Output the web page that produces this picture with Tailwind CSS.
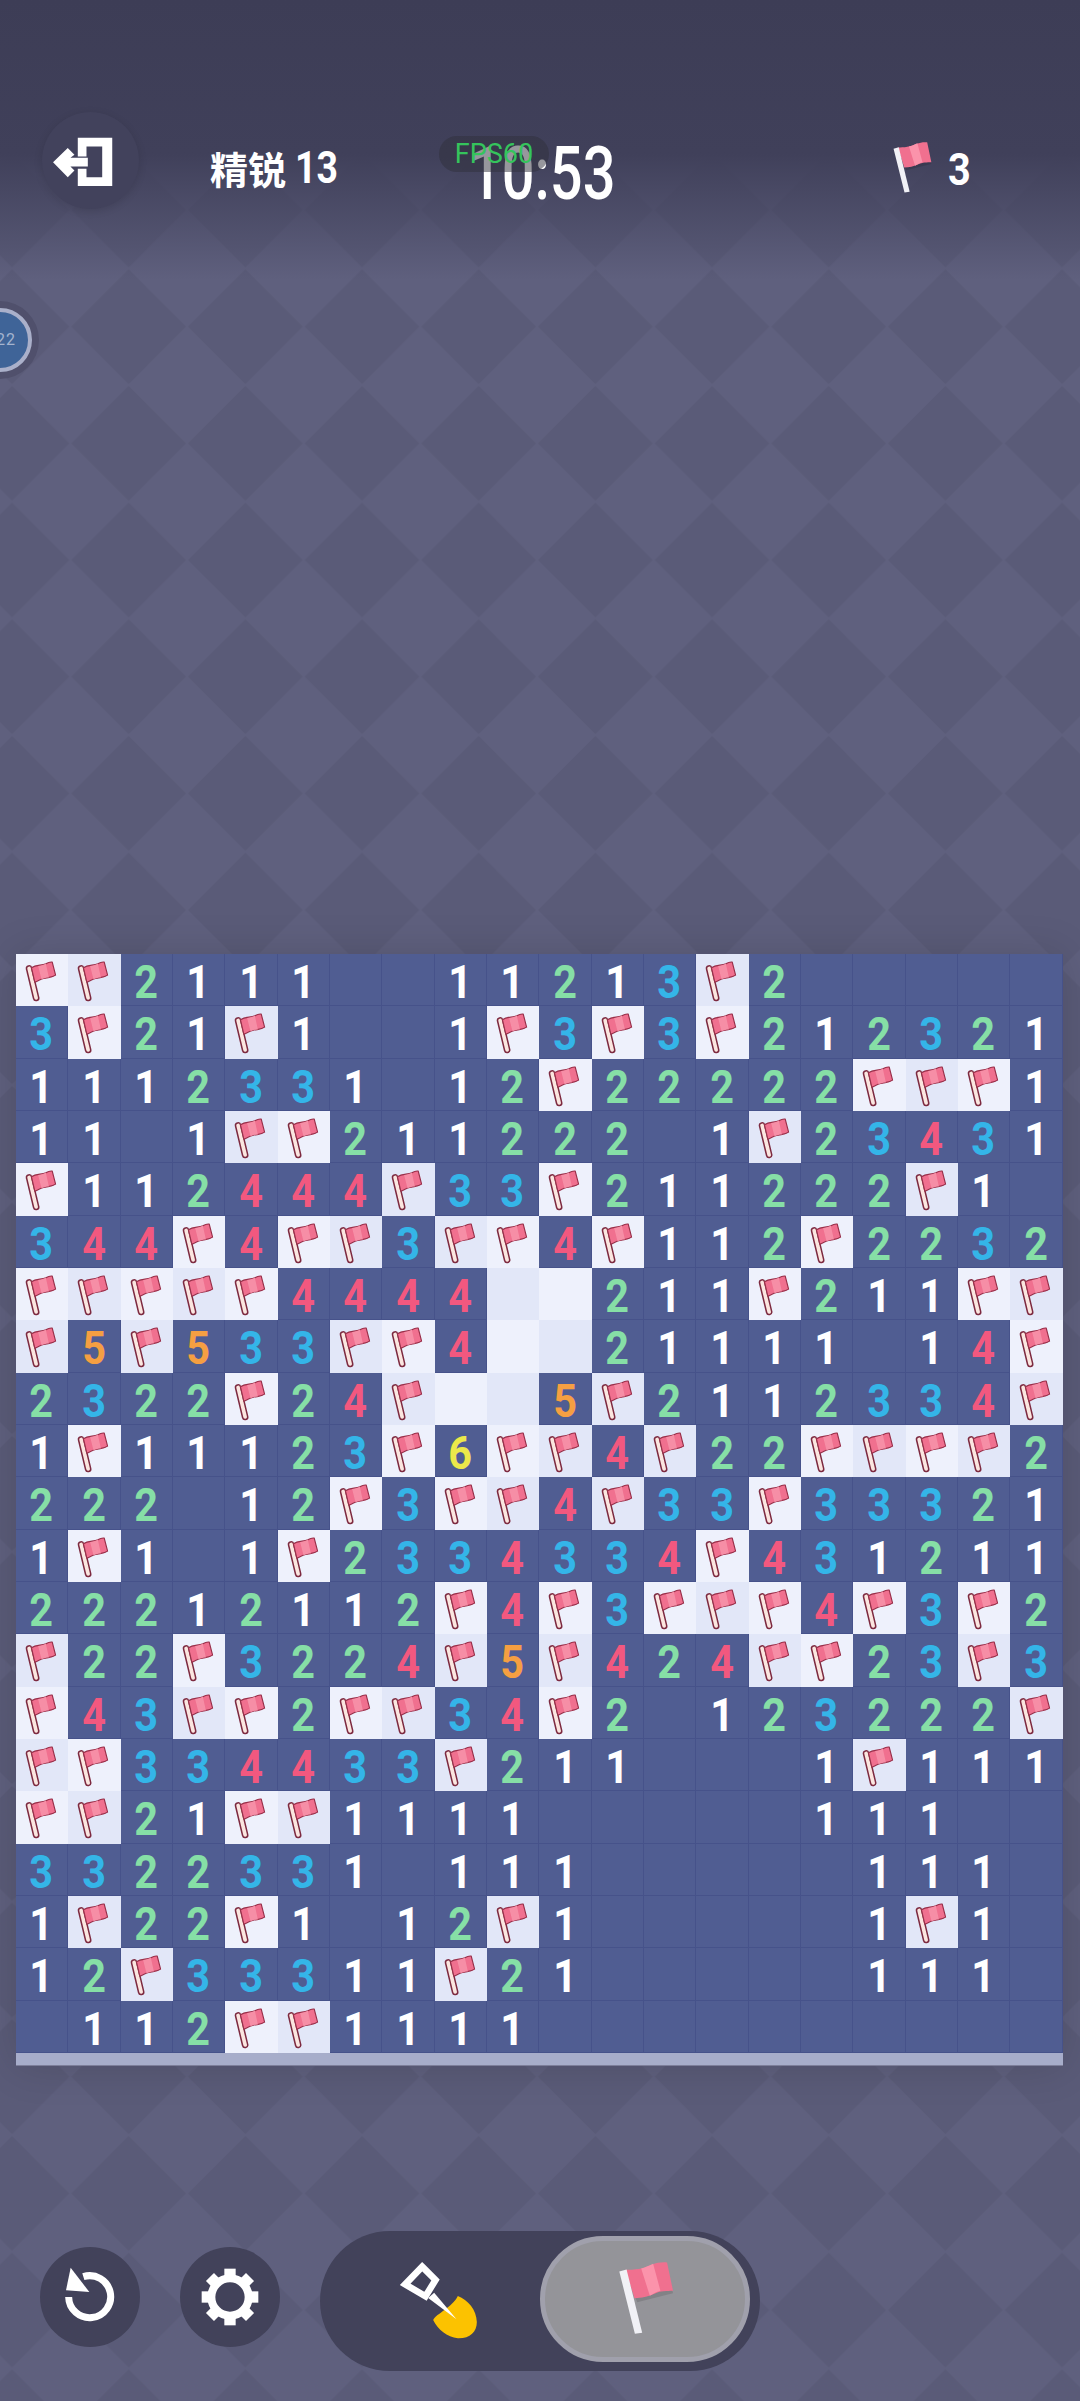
<!DOCTYPE html>
<html lang="zh">
<head>
  <meta charset="UTF-8">
  <meta name="viewport" content="width=device-width, initial-scale=1.0">
  <title>Minesweeper</title>
  <script src="https://cdn.jsdelivr.net/npm/@tailwindcss/browser@4"></script>
</head>
<body class="bg-[#5f607e] font-['Roboto','Noto_Sans_CJK_SC',sans-serif] text-white">

  <!-- shared flag drawings -->
  <svg class="hidden">
    <symbol id="cellFlag" viewBox="48 43 156 156">
      <path d="M87 86 L108 174" stroke="#7d2a40" stroke-width="20" stroke-linecap="round" fill="none"/>
      <path d="M87 86 L108 174" stroke="#fbe6e0" stroke-width="11" stroke-linecap="round" fill="none"/>
      <path d="M94 84 C108 74 124 78 137 72 C144 68 150 66 156 67 L166 106 C156 114 142 112 130 116 C120 119 112 124 104 127 Z" fill="#f0708f" stroke="#98304a" stroke-width="3.5" stroke-linejoin="round"/>
      <path d="M114 79 C122 78 130 75 137 72 L146 113 C138 113 132 115 124 118 Z" fill="#f68ea6"/>
    </symbol>
    <symbol id="plainFlag" viewBox="700 60 190 240">
      <path d="M735 92 L860 70 L878 153 L770 180 Z" fill="#000" opacity="0.12" transform="translate(0 10)"/>
      <path d="M734 92 C760 92 790 90 815 76 C830 70 848 68 860 70 L878 155 C860 156 840 154 820 165 C800 174 785 176 762 178 Z" fill="#f0708f"/>
      <path d="M782 88 C792 86 805 80 818 74 L840 155 C830 157 822 162 808 170 Z" fill="#fb93ab"/>
      <path d="M716 97 L738 91 L785 282 L763 285 Z" fill="#f1f1f6"/>
    </symbol>
  </svg>

  <div class="relative w-[1080px] h-[2401px] overflow-hidden">

    <!-- Background: diamonds and dark top -->
    <svg class="absolute inset-0" width="1080" height="2401">
      <defs>
        <pattern id="diamonds" width="116.67" height="116.67" patternUnits="userSpaceOnUse" patternTransform="translate(-46.3 35)">
          <path d="M58.33 1 L115.6 58.33 L58.33 115.6 L1 58.33 Z" fill="#000" fill-opacity="0.05"/>
        </pattern>
      </defs>
      <rect width="1080" height="2401" fill="url(#diamonds)"/>
    </svg>
    <div class="absolute inset-x-0 top-0 h-[280px] bg-[linear-gradient(to_bottom,#3d3d56_0%,#40405a_55%,#46466200_100%)]"></div>

    <!-- Side timer bubble -->
    <div class="absolute left-[-39px] top-[301px] w-[78px] h-[78px] rounded-full bg-[#50506c] flex items-center justify-center">
      <div class="w-[64px] h-[64px] rounded-full border-[4px] border-[#aab0ca] bg-[#3f6498] flex items-center justify-center">
        <span class="pl-[12px] text-[16px] tracking-[1px] text-[#a5b4cf]">22</span>
      </div>
    </div>

    <div class="relative pt-[112px]">

      <!-- Header -->
      <div class="relative flex items-start h-[97px] pl-[42px]">
        <button class="w-[97px] h-[97px] rounded-full bg-[#42425c] shadow-[0_2px_8px_rgba(0,0,0,0.12)]">
          <svg viewBox="125 335 290 290" class="w-full h-full">
            <path d="M232 412 H335 V556 H232 V505 H258 V530 H305 V438 H258 V468 H232 Z" fill="#fff"/>
            <path d="M158 485 L202 443 L222 463 L210 472 H262 V498 H210 L222 510 L202 530 Z" fill="#fff"/>
          </svg>
        </button>
        <div class="ml-[71px] mt-[33px] flex items-center h-[46px] font-bold">
          <span class="text-[38px] leading-none font-['Noto_Sans_CJK_SC',sans-serif]">精锐</span>
          <span class="ml-[9px] text-[44px] leading-none scale-x-85 origin-left">13</span>
        </div>
        <div class="absolute left-[469px] top-[25px] text-[74px] leading-none font-medium scale-x-[0.78] origin-left whitespace-nowrap">10:53</div>
        <div class="absolute left-[439px] top-[24px] w-[110px] h-[36px] rounded-full bg-[#2f2f3c]/50 flex items-center justify-center text-[27px] leading-none text-[#35c45c]">FPS60</div>
        <svg class="absolute left-[889px] top-[28px]" width="46" height="56"><use href="#plainFlag"/></svg>
        <span class="absolute left-[948px] top-[36px] text-[44px] leading-none font-bold scale-x-90 origin-left">3</span>
      </div>

      <!-- Board -->
      <div class="ml-[16px] mt-[745px] w-[1046.6px] shadow-[0_0_40px_rgba(0,0,0,0.14)]">
        <div id="board" class="grid grid-cols-[repeat(20,52.33px)] auto-rows-[52.33px] bg-[#505d92]"></div>
        <div class="h-[13px] bg-[#a7adca] border-b border-[#7d7f9a]"></div>
      </div>

      <!-- Bottom toolbar -->
      <div class="flex items-center mt-[165px] pl-[40px] gap-[40px]">
        <button class="w-[100px] h-[100px] rounded-full bg-[#42425a] -mt-[8px]">
          <svg viewBox="30 20 300 300" class="w-full h-full">
            <path d="M160 109 A63 63 0 1 1 116 170" fill="none" stroke="#fff" stroke-width="21"/>
            <path d="M122 82 L178 155 L108 150 Z" fill="#fff"/>
          </svg>
        </button>
        <button class="w-[100px] h-[100px] rounded-full bg-[#42425a] -mt-[8px]">
          <svg viewBox="450 20 300 300" class="w-full h-full">
            <circle cx="600" cy="170" r="56" fill="none" stroke="#fff" stroke-width="24"/>
            <g fill="#fff">
              <path d="M583 85 H617 V120 H583 Z"/>
              <path d="M583 85 H617 V120 H583 Z" transform="rotate(45 600 170)"/>
              <path d="M583 85 H617 V120 H583 Z" transform="rotate(90 600 170)"/>
              <path d="M583 85 H617 V120 H583 Z" transform="rotate(135 600 170)"/>
              <path d="M583 85 H617 V120 H583 Z" transform="rotate(180 600 170)"/>
              <path d="M583 85 H617 V120 H583 Z" transform="rotate(225 600 170)"/>
              <path d="M583 85 H617 V120 H583 Z" transform="rotate(270 600 170)"/>
              <path d="M583 85 H617 V120 H583 Z" transform="rotate(315 600 170)"/>
            </g>
          </svg>
        </button>
        <div class="flex items-center w-[440px] h-[140px] rounded-full bg-[#42425a] pl-[77px] pr-[10px]">
          <svg viewBox="50 55 245 240" width="82" height="80">
            <path d="M232 160 C262 172 288 200 289 238 C289 268 268 288 232 287 C200 282 172 262 158 232 C168 212 214 196 232 160 Z" fill="#fcc200"/>
            <path d="M143 166 L161 150 L228 230 Z" fill="#fff"/>
            <path d="M125 72 L165 112 L135 161 L74 125 Z" fill="none" stroke="#fff" stroke-width="20" stroke-linejoin="miter"/>
          </svg>
          <div class="ml-auto -mt-1 w-[210px] h-[126px] rounded-full border-[5px] border-[#a0a0ac] bg-[#949499] flex items-center justify-center">
            <svg width="63" height="80"><use href="#plainFlag"/></svg>
          </div>
        </div>
      </div>
    </div>
  </div>

  <script>
    // F flag, W open white cell, dot empty
    const rows = [
      'FF2111..11213F2.....',
      '3F21F1..1F3F3F212321',
      '1112331.12F22222FFF1',
      '11.1FF211222.1F23431',
      'F112444F33F211222F1.',
      '344F4FF3FF4F112F2232',
      'FFFFF4444WW211F211FF',
      'F5F533FF4WW21111.14F',
      '2322F24FWW5F2112334F',
      '1F11123F6FF4F22FFFF2',
      '222.12F3FF4F33F33321',
      '1F1.1F2334334F431211',
      '22212112F4F3FFF4F3F2',
      'F22F3224F5F424FF23F3',
      'F43FF2FF34F2.123222F',
      'FF334433F211...1F111',
      'FF21FF1111.....111..',
      '3322331.111.....111.',
      '1F22F1.12F1.....1F1.',
      '12F33311F21.....111.',
      '.112FF1111..........'
    ];

    const digitColors = {
      '1': 'text-white',
      '2': 'text-[#86dfa6]',
      '3': 'text-[#34b5e8]',
      '4': 'text-[#f2587f]',
      '5': 'text-[#f59f42]',
      '6': 'text-[#ebe84a]'
    };

    const board = document.getElementById('board');
    rows.forEach((row, y) => {
      [...row].forEach((ch, x) => {
        const cell = document.createElement('div');
        const light = (x + y) % 2 === 0 ? 'bg-[#eef1fc]' : 'bg-[#e2e7f8]';
        if (ch === 'F') {
          cell.className = `${light} flex items-center justify-center`;
          cell.innerHTML = '<svg class="w-full h-full"><use href="#cellFlag"/></svg>';
        } else if (ch === 'W') {
          cell.className = light;
        } else {
          cell.className = 'flex items-center justify-center border-r border-b border-[#46528a]';
          if (ch !== '.') {
            cell.innerHTML = `<span class="pt-[5px] text-[46px] leading-none font-bold scale-x-90 ${digitColors[ch]}">${ch}</span>`;
          }
        }
        board.appendChild(cell);
      });
    });
  </script>

</body>
</html>
